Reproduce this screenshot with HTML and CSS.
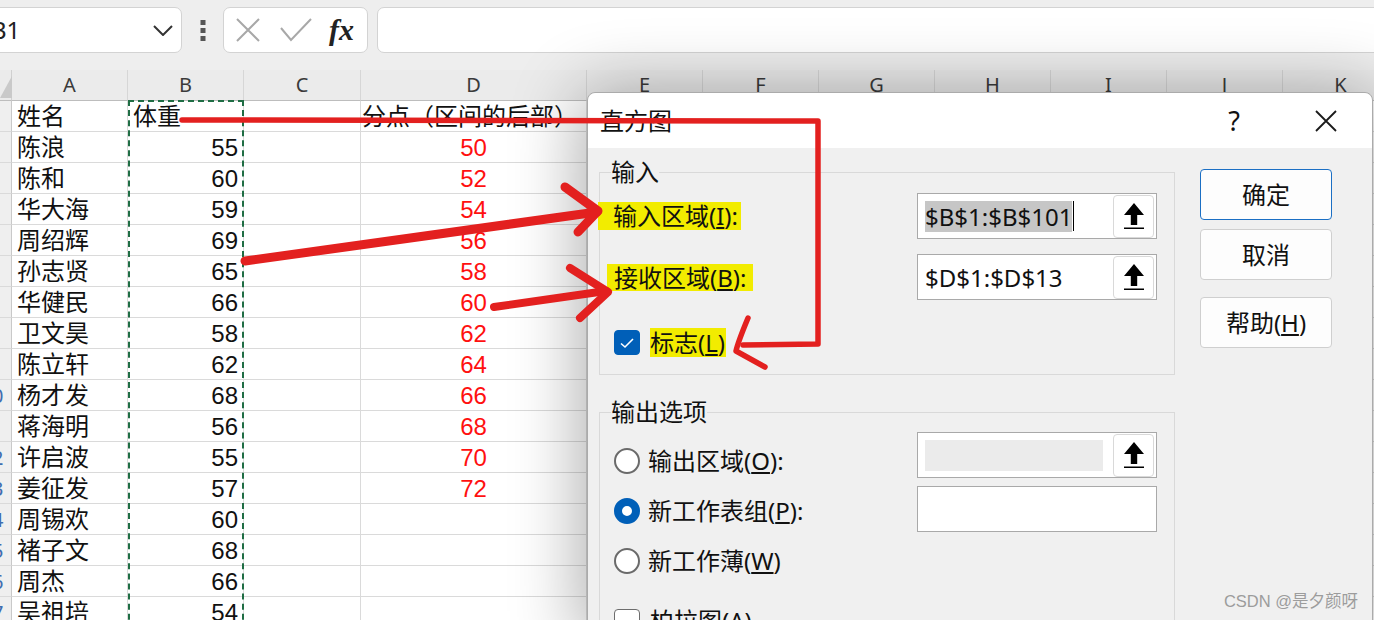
FILE: index.html
```html
<!DOCTYPE html>
<html lang="zh">
<head>
<meta charset="utf-8">
<title>直方图</title>
<link rel="stylesheet" href="styles.css">
</head>
<body>
<div class="app">
  <div class="formula-bar">
    <div class="name-box">
      <span class="name-text">B1</span>
      <svg class="chev" width="20" height="11" viewBox="0 0 20 11"><path d="M1 1 L10 10 L19 1" stroke="#333" stroke-width="2" fill="none"/></svg>
    </div>
    <div class="dots">
      <svg width="6" height="21" viewBox="0 0 6 21"><rect x="0.5" y="0" width="5" height="5" fill="#555"/><rect x="0.5" y="8" width="5" height="5" fill="#555"/><rect x="0.5" y="16" width="5" height="5" fill="#555"/></svg>
    </div>
    <div class="fx-box">
      <svg class="ic-x" width="24" height="24" viewBox="0 0 24 24"><path d="M1 1 L23 23 M23 1 L1 23" stroke="#a8a8a8" stroke-width="2" fill="none"/></svg>
      <svg class="ic-ok" width="32" height="24" viewBox="0 0 32 24"><path d="M1 10 L11 22 L31 1" stroke="#a8a8a8" stroke-width="2" fill="none"/></svg>
      <span class="fx">fx</span>
    </div>
    <div class="formula-input"></div>
  </div>

  <div class="sheet">
    <div class="col-heads">
      <div class="corner"><svg width="12" height="24" viewBox="0 0 12 24"><polygon points="12,2 12,24 0,24" fill="#c9c9c9"/></svg></div>
      <div class="ch">A</div><div class="ch">B</div><div class="ch">C</div><div class="ch">D</div>
      <div class="ch">E</div><div class="ch">F</div><div class="ch">G</div><div class="ch">H</div>
      <div class="ch">I</div><div class="ch">J</div><div class="ch">K</div>
    </div>

    <div class="row"><div class="rh"><span>1</span></div><div class="c">姓名</div><div class="c">体重</div><div class="c"></div><div class="c head-d">分点（区间的后部）</div><div class="c fill"></div></div>
    <div class="row"><div class="rh"><span>2</span></div><div class="c">陈浪</div><div class="c num">55</div><div class="c"></div><div class="c red">50</div><div class="c fill"></div></div>
    <div class="row"><div class="rh"><span>3</span></div><div class="c">陈和</div><div class="c num">60</div><div class="c"></div><div class="c red">52</div><div class="c fill"></div></div>
    <div class="row"><div class="rh"><span>4</span></div><div class="c">华大海</div><div class="c num">59</div><div class="c"></div><div class="c red">54</div><div class="c fill"></div></div>
    <div class="row"><div class="rh"><span>5</span></div><div class="c">周绍辉</div><div class="c num">69</div><div class="c"></div><div class="c red">56</div><div class="c fill"></div></div>
    <div class="row"><div class="rh"><span>6</span></div><div class="c">孙志贤</div><div class="c num">65</div><div class="c"></div><div class="c red">58</div><div class="c fill"></div></div>
    <div class="row"><div class="rh"><span>7</span></div><div class="c">华健民</div><div class="c num">66</div><div class="c"></div><div class="c red">60</div><div class="c fill"></div></div>
    <div class="row"><div class="rh"><span>8</span></div><div class="c">卫文昊</div><div class="c num">58</div><div class="c"></div><div class="c red">62</div><div class="c fill"></div></div>
    <div class="row"><div class="rh"><span>9</span></div><div class="c">陈立轩</div><div class="c num">62</div><div class="c"></div><div class="c red">64</div><div class="c fill"></div></div>
    <div class="row"><div class="rh"><span>10</span></div><div class="c">杨才发</div><div class="c num">68</div><div class="c"></div><div class="c red">66</div><div class="c fill"></div></div>
    <div class="row"><div class="rh"><span>11</span></div><div class="c">蒋海明</div><div class="c num">56</div><div class="c"></div><div class="c red">68</div><div class="c fill"></div></div>
    <div class="row"><div class="rh"><span>12</span></div><div class="c">许启波</div><div class="c num">55</div><div class="c"></div><div class="c red">70</div><div class="c fill"></div></div>
    <div class="row"><div class="rh"><span>13</span></div><div class="c">姜征发</div><div class="c num">57</div><div class="c"></div><div class="c red">72</div><div class="c fill"></div></div>
    <div class="row"><div class="rh"><span>14</span></div><div class="c">周锡欢</div><div class="c num">60</div><div class="c"></div><div class="c"></div><div class="c fill"></div></div>
    <div class="row"><div class="rh"><span>15</span></div><div class="c">褚子文</div><div class="c num">68</div><div class="c"></div><div class="c"></div><div class="c fill"></div></div>
    <div class="row"><div class="rh"><span>16</span></div><div class="c">周杰</div><div class="c num">66</div><div class="c"></div><div class="c"></div><div class="c fill"></div></div>
    <div class="row"><div class="rh"><span>17</span></div><div class="c">吴祖培</div><div class="c num">54</div><div class="c"></div><div class="c"></div><div class="c fill"></div></div>

    <div class="marquee"></div>
  </div>
</div>

<div class="dialog">
  <div class="dlg-title">
    <span class="dlg-name">直方图</span>
    <span class="dlg-help">?</span>
    <span class="dlg-close"><svg width="22" height="22" viewBox="0 0 22 22"><path d="M1 1 L21 21 M21 1 L1 21" stroke="#1a1a1a" stroke-width="1.8" fill="none"/></svg></span>
  </div>
  <div class="dlg-body">
    <div class="dlg-main">
      <fieldset class="group group-in">
        <legend>输入</legend>
        <div class="in-row">
          <span class="hl hl-1">输入区域(<u>I</u>):</span>
          <div class="range">
            <span class="range-text"><span class="sel">$B$1:$B$101</span><span class="caret"></span></span>
            <span class="range-btn"><svg width="20" height="26" viewBox="0 0 20 26"><path d="M10 0 L20 12 L13.2 12 L13.2 22 L6.8 22 L6.8 12 L0 12 Z" fill="#000"/><rect x="0" y="24.5" width="20" height="1.6" fill="#000"/></svg></span>
          </div>
        </div>
        <div class="in-row row-2">
          <span class="hl hl-2">接收区域(<u>B</u>):</span>
          <div class="range">
            <span class="range-text">$D$1:$D$13</span>
            <span class="range-btn"><svg width="20" height="26" viewBox="0 0 20 26"><path d="M10 0 L20 12 L13.2 12 L13.2 22 L6.8 22 L6.8 12 L0 12 Z" fill="#000"/><rect x="0" y="24.5" width="20" height="1.6" fill="#000"/></svg></span>
          </div>
        </div>
        <div class="check-row">
          <span class="cbox checked"><svg width="16" height="12" viewBox="0 0 16 12"><path d="M2 6.5 L6 10 L14 2" stroke="#fff" stroke-width="1.6" fill="none"/></svg></span>
          <span class="hl hl-3">标志(<u>L</u>)</span>
        </div>
      </fieldset>

      <fieldset class="group group-out">
        <legend>输出选项</legend>
        <div class="out-grid">
          <div class="opts">
            <div class="opt"><span class="radio"></span><span class="opt-label">输出区域(<u>O</u>):</span></div>
            <div class="opt"><span class="radio on"></span><span class="opt-label">新工作表组(<u>P</u>):</span></div>
            <div class="opt"><span class="radio"></span><span class="opt-label">新工作薄(<u>W</u>)</span></div>
            <div class="opt opt-check"><span class="cbox"></span><span class="opt-label">柏拉图(<u>A</u>)</span></div>
          </div>
          <div class="boxes">
            <div class="range">
              <span class="range-disabled"></span>
              <span class="range-btn"><svg width="20" height="26" viewBox="0 0 20 26"><path d="M10 0 L20 12 L13.2 12 L13.2 22 L6.8 22 L6.8 12 L0 12 Z" fill="#000"/><rect x="0" y="24.5" width="20" height="1.6" fill="#000"/></svg></span>
            </div>
            <div class="range range-empty"></div>
          </div>
        </div>
      </fieldset>
    </div>
    <div class="dlg-buttons">
      <div class="btn btn-default">确定</div>
      <div class="btn btn-cancel">取消</div>
      <div class="btn btn-help">帮助(<u>H</u>)</div>
    </div>
  </div>
</div>

<svg class="annotations" width="1374" height="620" viewBox="0 0 1374 620">
  <g stroke="#e3201f" fill="none" stroke-linecap="round" stroke-linejoin="round">
    <path d="M182 120 L818 121 L818 344 L743 345" stroke-width="5.5"/>
    <path d="M748 318 Q738 342 736 351 L765 367" stroke-width="5.5"/>
    <path d="M245 261 L597 212" stroke-width="9"/>
    <path d="M565 187 L598 211 L578 232" stroke-width="9"/>
    <path d="M494 307 L606 291" stroke-width="8"/>
    <path d="M570 268 L608 292 L580 318" stroke-width="8"/>
  </g>
</svg>

<div class="watermark">CSDN @是夕颜呀</div>
</body>
</html>
```

FILE: styles.css
```css
* { box-sizing: border-box; }
html, body { margin: 0; padding: 0; }
body {
  width: 1374px;
  height: 620px;
  overflow: hidden;
  position: relative;
  background: #ffffff;
  font-family: "Liberation Sans", "Noto Sans CJK SC", sans-serif;
  color: #000;
}

/* ---------- formula bar ---------- */
.formula-bar {
  height: 70px;
  background: #eeeeee;
  display: flex;
  align-items: flex-start;
  padding-top: 7px;
  overflow: hidden;
}
.name-box {
  flex: none;
  width: 222px;
  height: 46px;
  margin-left: -40px;
  background: #fff;
  border: 1px solid #d3d3d3;
  border-radius: 7px;
  display: flex;
  align-items: center;
  padding-left: 30px;
  padding-right: 8px;
  font-family: "Noto Sans", sans-serif;
  font-size: 24px;
  color: #222;
}
.name-text { flex: 1; line-height: 30px; }
.dots {
  flex: none;
  width: 41px;
  height: 46px;
  display: flex;
  justify-content: center;
  padding-top: 13px;
}
.fx-box {
  flex: none;
  width: 145px;
  height: 46px;
  background: #fff;
  border: 1px solid #d3d3d3;
  border-radius: 7px;
  display: flex;
  align-items: center;
  padding-left: 12px;
}
.ic-ok { margin-left: 20px; }
.fx {
  margin-left: 17px;
  font-family: "Liberation Serif", "DejaVu Serif", serif;
  font-style: italic;
  font-weight: bold;
  font-size: 30px;
  color: #222;
  line-height: 30px;
}
.formula-input {
  flex: none;
  width: 1010px;
  height: 46px;
  margin-left: 9px;
  background: #fff;
  border: 1px solid #d3d3d3;
  border-radius: 7px;
}

/* ---------- sheet ---------- */
.sheet { position: relative; }
.col-heads {
  display: grid;
  grid-template-columns: 12px 116px 116px 117px 226px repeat(7, 116px);
  grid-template-rows: 31px;
  height: 31px;
  background: #ebebeb;
}
.corner {
  border-bottom: 1px solid #bdbdbd;
  border-right: 1px solid #d0d0d0;
  padding-top: 4px;
}
.corner svg { display: block; }
.ch {
  border-right: 1px solid #d6d6d6;
  border-bottom: 1px solid #bdbdbd;
  text-align: center;
  font-family: "Noto Sans", sans-serif;
  font-size: 20px;
  line-height: 30px;
  color: #3a3a3a;
}
.row {
  display: grid;
  grid-template-columns: 12px 116px 116px 117px 226px 1fr;
  grid-template-rows: 31px;
  height: 31px;
}
.rh {
  overflow: hidden;
  background: #efefef;
  border-right: 1px solid #c9c9c9;
  border-bottom: 1px solid #dadada;
  font-family: "Noto Sans", sans-serif;
  font-size: 20px;
  line-height: 28px;
  padding-top: 2px;
  color: #3f6db0;
}
.rh span {
  display: block;
  width: 40px;
  margin-left: -28px;
  text-align: center;
}
.c {
  border-right: 1px solid #dadada;
  border-bottom: 1px solid #dadada;
  font-size: 24px;
  line-height: 28px;
  padding: 2px 5px 0 5px;
  white-space: nowrap;
  overflow: visible;
  color: #111;
}
.num { text-align: right; }
.red { text-align: center; color: #ff1010; }
.head-d { padding-left: 1px; }
.fill { border-right: none; }
.marquee {
  position: absolute;
  left: 128px;
  top: 30px;
  width: 116px;
  height: 560px;
  border: 2px dashed #1f6d44;
  pointer-events: none;
}

/* ---------- dialog ---------- */
.dialog {
  position: absolute;
  left: 587px;
  top: 92px;
  width: 786px;
  height: 540px;
  background: #f0f0f0;
  border: 1px solid #ababab;
  border-radius: 8px 8px 0 0;
  box-shadow: 0 6px 70px 6px rgba(0, 0, 0, 0.33);
  font-family: "Noto Sans", "Noto Sans CJK SC", sans-serif;
  font-size: 24px;
  color: #111;
  overflow: hidden;
}
.dlg-title {
  height: 55px;
  background: #fff;
  display: flex;
  align-items: center;
  padding-left: 12px;
  border-radius: 8px 8px 0 0;
}
.dlg-name { flex: 1; line-height: 30px; }
.dlg-help {
  width: 40px;
  text-align: center;
  font-size: 27px;
  line-height: 30px;
}
.dlg-close {
  width: 40px;
  margin-left: 52px;
  margin-right: 26px;
  display: flex;
  justify-content: center;
}
.dlg-body {
  display: flex;
  align-items: flex-start;
}
.dlg-main {
  width: 576px;
  margin-left: 11px;
}
.group {
  margin: 0;
  min-width: 0;
  width: 576px;
  border: 1px solid #d9d9d9;
  padding: 7px 17px 17px 0;
}
.group legend {
  margin-left: 11px;
  padding: 0;
  font-size: 24px;
  line-height: 28px;
}
.group-in { margin-top: 10px; }
.group-out { margin-top: 23px; padding-top: 6px; height: 230px; }

.in-row {
  display: flex;
  align-items: center;
  justify-content: space-between;
  height: 46px;
}
.row-2 { margin-top: 15px; }
.hl {
  background: #f2ec00;
  white-space: nowrap;
}
.hl-1 { margin-left: -2px; padding: 0 3px 0 15px; line-height: 28px; }
.hl-2 { margin-left: 7px; padding: 0 7px 0 7px; line-height: 27px; }
.hl-3 { margin-left: 10px; padding: 0 1px 0 0; line-height: 29px; }

.range {
  flex: none;
  width: 240px;
  height: 46px;
  background: #fff;
  border: 1px solid #a9a9a9;
  display: flex;
  align-items: center;
  padding-left: 7px;
  padding-right: 2px;
}
.range-text {
  flex: 1;
  display: flex;
  align-items: center;
  line-height: 31px;
  white-space: nowrap;
}
.sel { background: #c6c6c6; line-height: 31px; }
.caret {
  display: inline-block;
  width: 1px;
  height: 30px;
  background: #000;
  margin-left: 1px;
}
.range-btn {
  flex: none;
  width: 41px;
  height: 43px;
  background: #fff;
  border: 1px solid #d9d9d9;
  border-radius: 4px;
  display: flex;
  align-items: center;
  justify-content: center;
}
.range-btn svg { display: block; }
.range-disabled {
  flex: 1;
  height: 31px;
  background: #ebebeb;
  margin-right: 10px;
}
.range-empty { margin-top: 8px; }

.check-row {
  display: flex;
  align-items: center;
  height: 29px;
  margin-top: 28px;
  padding-left: 14px;
}
.cbox {
  flex: none;
  width: 26px;
  height: 25px;
  border-radius: 4px;
  background: #fff;
  border: 1.5px solid #6d6d6d;
  display: flex;
  align-items: center;
  justify-content: center;
}
.cbox.checked {
  background: #005fb8;
  border-color: #005fb8;
}

.out-grid {
  display: grid;
  grid-template-columns: 1fr 240px;
}
.opts { padding-top: 4px; }
.opt {
  display: flex;
  align-items: center;
  height: 50px;
  padding-left: 14px;
}
.opt-label { margin-left: 8px; line-height: 30px; white-space: nowrap; }
.opt-check { margin-top: 10px; }
.opt-check .opt-label { margin-left: 10px; }
.radio {
  flex: none;
  width: 26px;
  height: 26px;
  border-radius: 50%;
  border: 2px solid #6a6a6a;
  background: #fff;
}
.radio.on {
  border: 8.5px solid #005fb8;
  background: #fff;
}
.boxes { padding-top: 0; }

.dlg-buttons {
  width: 132px;
  margin-left: 25px;
  padding-top: 21px;
  display: flex;
  flex-direction: column;
}
.btn {
  height: 51px;
  background: #fdfdfd;
  border: 1px solid #cfcfcf;
  border-radius: 4px;
  display: flex;
  align-items: center;
  justify-content: center;
  line-height: 30px;
}
.btn-default { border-color: #1b6fc4; }
.btn-cancel { margin-top: 9px; }
.btn-help { margin-top: 17px; }

/* ---------- overlays ---------- */
.annotations {
  position: absolute;
  left: 0;
  top: 0;
  pointer-events: none;
}
.watermark {
  position: absolute;
  right: 16px;
  bottom: 8px;
  font-family: "Liberation Sans", "Noto Sans CJK SC", sans-serif;
  font-size: 16.5px;
  color: #9c9c9c;
  white-space: nowrap;
}
```
